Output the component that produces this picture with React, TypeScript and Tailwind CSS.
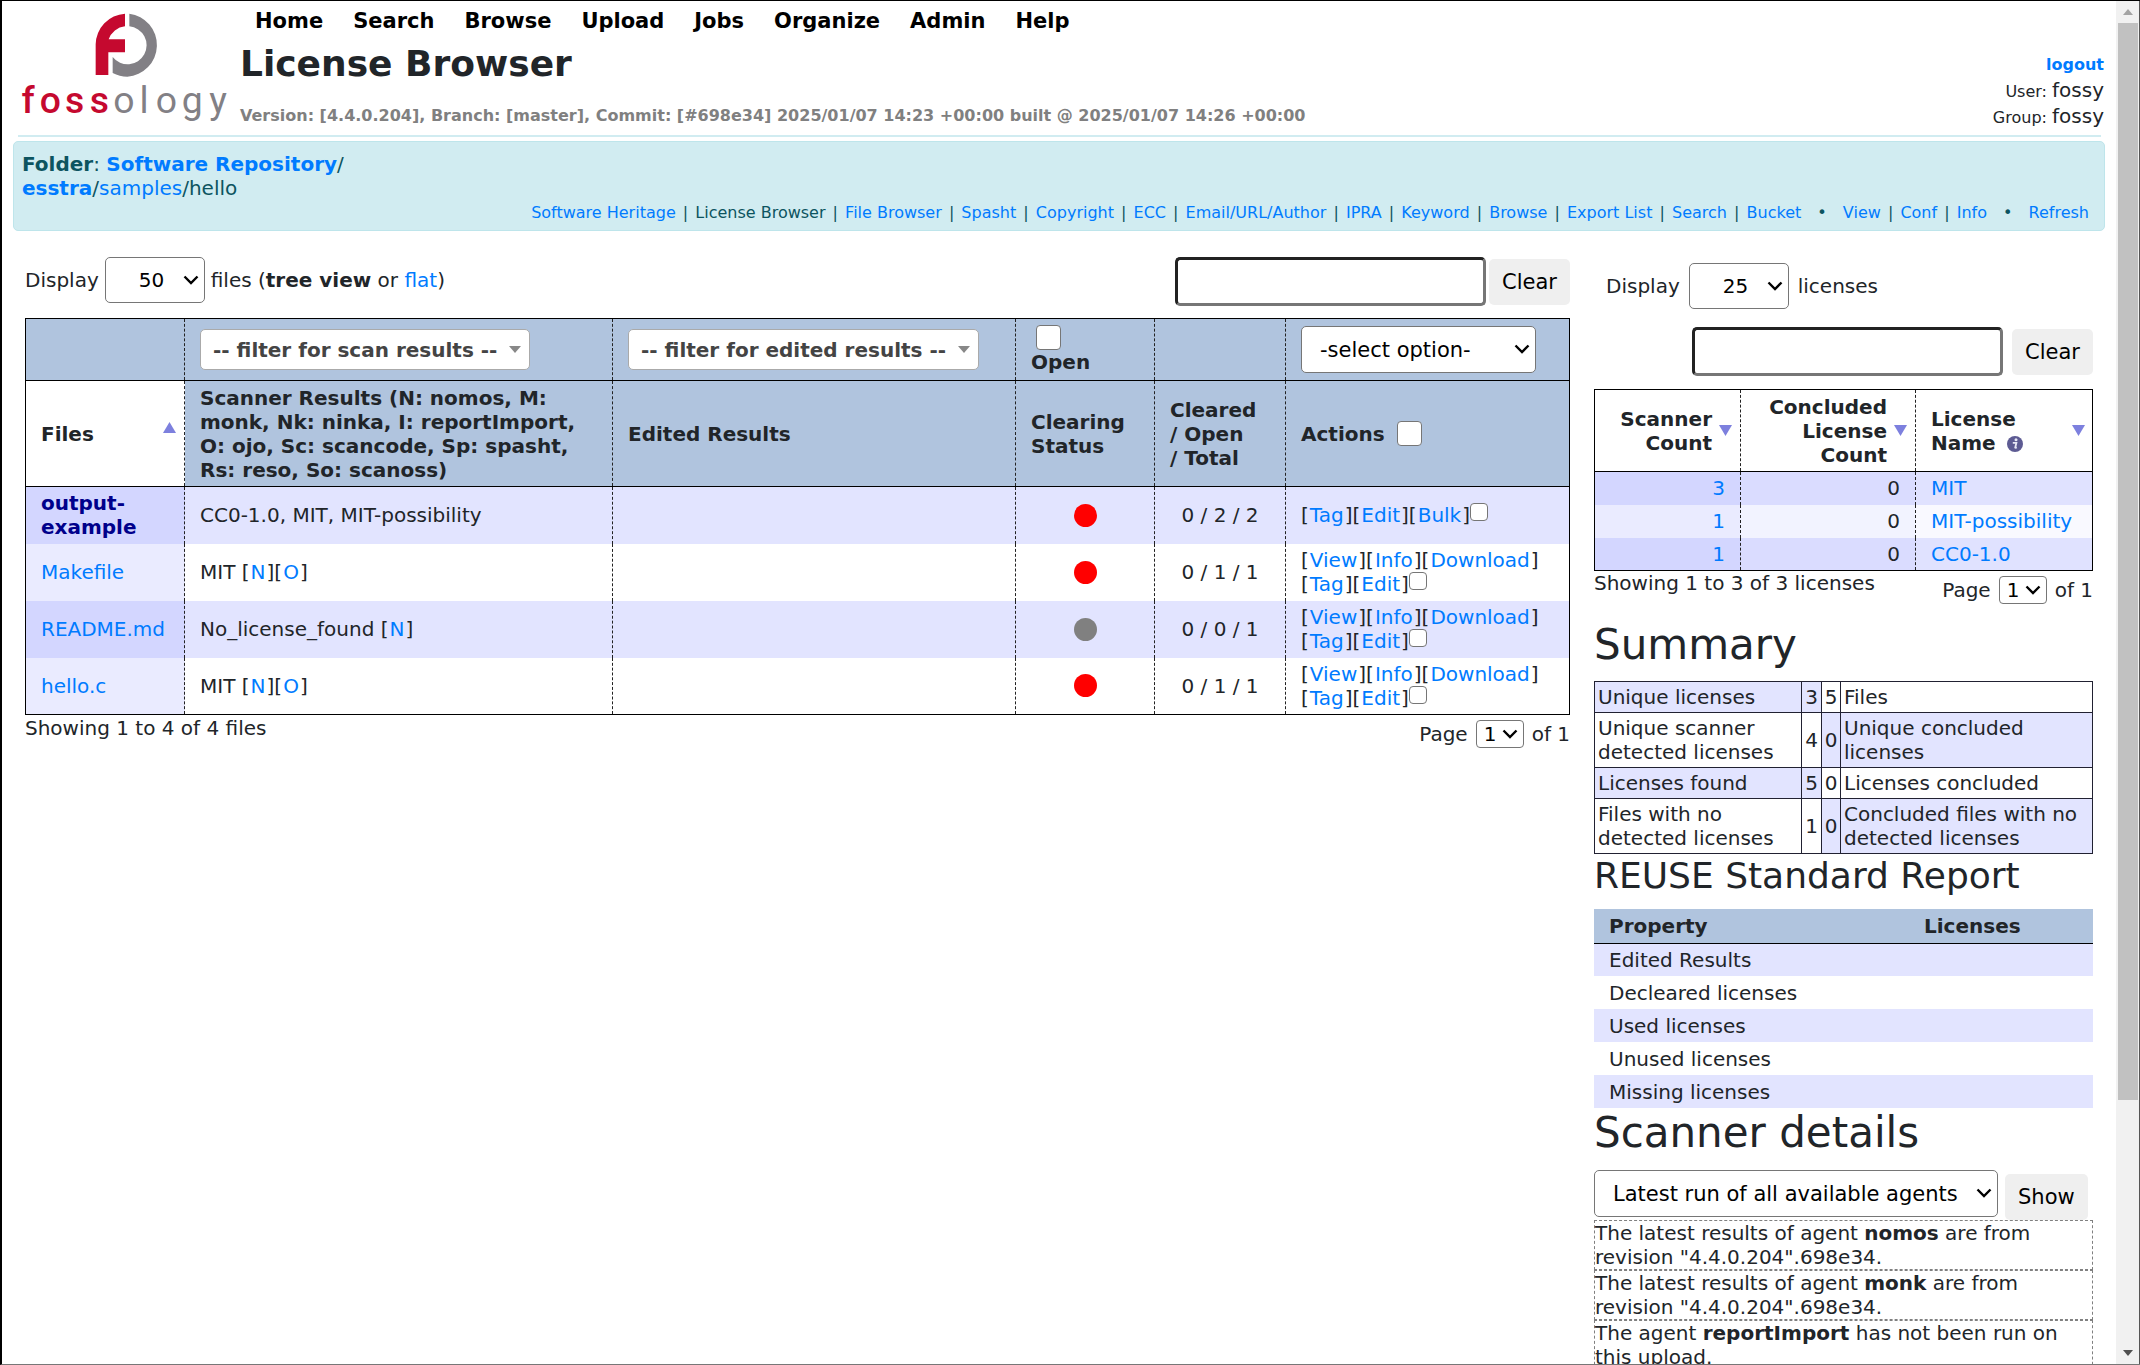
import React from "react";

const link = "text-[#007bff] hover:underline";

function Logo() {
  return (
    <svg viewBox="0 0 660 360" className="h-[120px] w-[220px] shrink-0" role="img" aria-label="fossology">
      <path
        d="M345 26 A94 94 0 0 0 257 118 V210 H295 V142 H345 V103 H296 A57 57 0 0 1 345 64 Z"
        fill="#c5092f"
      />
      <path
        d="M358 26 A95 95 0 0 1 352 215 A95 95 0 0 1 308 204 V156 A57 57 0 1 0 358 64 Z"
        fill="#828085"
      />
      <g fontFamily="Roboto, sans-serif" fontSize="112" textAnchor="middle">
        <text y="323" x="54 121 194 268" fontWeight="500" fill="#c5092f">
          foss
        </text>
        <text y="323" x="342 402 469 547 624" fill="#828085">
          ology
        </text>
      </g>
    </svg>
  );
}

function Chevron({ className }: { className: string }) {
  return (
    <svg viewBox="0 0 16 10" className={"pointer-events-none absolute h-[10px] w-4 " + className} aria-hidden="true">
      <path d="M1.5 1.5 L8 8 L14.5 1.5" fill="none" stroke="#000" strokeWidth="2.4" />
    </svg>
  );
}

function Triangle({ up = false }: { up?: boolean }) {
  return (
    <svg viewBox="0 0 13 11" className="h-[11px] w-[13px] shrink-0" aria-hidden="true">
      <path d={up ? "M6.5 0 L13 11 H0 Z" : "M0 0 H13 L6.5 11 Z"} fill="#7d80de" />
    </svg>
  );
}

function SizeSelect({ value, label }: { value: string; label: string }) {
  return (
    <span className="relative inline-flex">
      <select
        aria-label={label}
        className="h-[46px] w-[100px] appearance-none rounded-[5px] border border-[#767676] bg-white pl-[33px] text-xl text-black"
      >
        <option>{value}</option>
      </select>
      <Chevron className="right-1.5 top-[18px]" />
    </span>
  );
}

function Pager() {
  return (
    <div className="flex items-center gap-2 pt-[5px]">
      <label className="flex items-center gap-2">
        Page
        <span className="relative inline-flex">
          <select className="h-7 w-12 appearance-none rounded-[4px] border border-[#767676] bg-white pl-[7px] text-xl leading-6 text-black">
            <option>1</option>
          </select>
          <Chevron className="right-1.5 top-[9px]" />
        </span>
      </label>
      of 1
    </div>
  );
}

function SearchBox({ label }: { label: string }) {
  return (
    <input
      type="text"
      aria-label={label}
      className="h-[49px] w-[311px] rounded-[5px] border-[3px] border-t-[#222] border-r-[#767676] border-b-[#767676] border-l-[#222] bg-white px-4 text-xl"
    />
  );
}

function GreyButton({ children }: { children: React.ReactNode }) {
  return <button className="h-[46px] rounded-[5px] bg-[#efefef] px-[13px] text-[21px] text-black">{children}</button>;
}

function Check({ label, big = false }: { label: string; big?: boolean }) {
  return (
    <input
      type="checkbox"
      aria-label={label}
      className={
        (big ? "size-[25px] rounded-[4px] " : "size-[18px] rounded-[4px] ") +
        "shrink-0 appearance-none border border-[#767676] bg-white"
      }
    />
  );
}

function FilterSelect({ text, width }: { text: string; width: string }) {
  return (
    <span className={"relative inline-flex " + width}>
      <select
        aria-label={text}
        className="h-[41px] w-full appearance-none rounded-[5px] border border-[#aaa] bg-white pl-3 text-xl font-bold text-[#444]"
      >
        <option>{text}</option>
      </select>
      <svg viewBox="0 0 12 7" className="pointer-events-none absolute right-[9px] top-[17px] h-[7px] w-3" aria-hidden="true">
        <path d="M0 0 H12 L6 7 Z" fill="#888" />
      </svg>
    </span>
  );
}

function Bracketed({ items }: { items: string[] }) {
  return (
    <>
      {items.map((t) => (
        <span key={t}>
          [
          <a href="#" className={"px-px " + link}>
            {t}
          </a>
          ]
        </span>
      ))}
    </>
  );
}

const menu = ["Home", "Search", "Browse", "Upload", "Jobs", "Organize", "Admin", "Help"];

const subMenu = [
  ["Software Heritage", "License Browser", "File Browser", "Spasht", "Copyright", "ECC", "Email/URL/Author", "IPRA", "Keyword", "Browse", "Export List", "Search", "Bucket"],
  ["View", "Conf", "Info"],
  ["Refresh"],
];

const files = [
  { name: "output-example", dir: true, result: "CC0-1.0, MIT, MIT-possibility", scans: [], color: "bg-[red]", count: "0 / 2 / 2", actions: [["Tag", "Edit", "Bulk"]] },
  { name: "Makefile", dir: false, result: "MIT ", scans: ["N", "O"], color: "bg-[red]", count: "0 / 1 / 1", actions: [["View", "Info", "Download"], ["Tag", "Edit"]] },
  { name: "README.md", dir: false, result: "No_license_found ", scans: ["N"], color: "bg-[gray]", count: "0 / 0 / 1", actions: [["View", "Info", "Download"], ["Tag", "Edit"]] },
  { name: "hello.c", dir: false, result: "MIT ", scans: ["N", "O"], color: "bg-[red]", count: "0 / 1 / 1", actions: [["View", "Info", "Download"], ["Tag", "Edit"]] },
];

const licenses = [
  { scanner: 3, concluded: 0, name: "MIT" },
  { scanner: 1, concluded: 0, name: "MIT-possibility" },
  { scanner: 1, concluded: 0, name: "CC0-1.0" },
];

const summary = [
  ["Unique licenses", "3", "5", "Files"],
  ["Unique scanner detected licenses", "4", "0", "Unique concluded licenses"],
  ["Licenses found", "5", "0", "Licenses concluded"],
  ["Files with no detected licenses", "1", "0", "Concluded files with no detected licenses"],
];

const reuse = ["Edited Results", "Decleared licenses", "Used licenses", "Unused licenses", "Missing licenses"];

const dash = "border-r border-dashed border-r-[#222]";

function Header() {
  return (
    <header className="flex min-h-[134px] pr-3 pl-2">
      <div className="pt-1">
        <Logo />
      </div>
      <div className="flex-1 pt-2 pl-2.5">
        <nav className="flex gap-[30px] pl-[15px] text-[21px] leading-6 font-bold text-black">
          {menu.map((m) => (
            <a key={m} href="#">
              {m}
            </a>
          ))}
        </nav>
        <h1 className="mt-[9px] text-[36px] leading-[44px] font-bold">License Browser</h1>
        <p className="mt-[18px] text-base leading-6 font-bold text-[gray]">
          Version: [4.4.0.204], Branch: [master], Commit: [#698e34] 2025/01/07 14:23 +00:00 built @ 2025/01/07 14:26 +00:00
        </p>
      </div>
      <div className="flex flex-col items-end pt-[50px]">
        <a href="#" className="text-base leading-[27px] font-bold text-[#007bff]">
          logout
        </a>
        <div className="text-base leading-[25px]">
          User: <span className="text-xl leading-[25px]">fossy</span>
        </div>
        <div className="text-base leading-[25px]">
          Group: <span className="text-xl leading-[25px]">fossy</span>
        </div>
      </div>
    </header>
  );
}

function FolderBar() {
  return (
    <section className="mx-[11px] mt-1 h-[90px] rounded-[5px] border border-[#bee5eb] bg-[#d1ecf1] px-2 pt-2.5 text-[#0c5460]">
      <div>
        <b>Folder</b>:{" "}
        <a href="#" className="font-bold text-[#007bff]">
          Software Repository
        </a>
        /
        <br />
        <a href="#" className="font-bold text-[#007bff]">
          esstra
        </a>
        /
        <a href="#" className={link}>
          samples
        </a>
        /hello
      </div>
      <div className="pt-px pr-[7px] text-right text-base leading-6">
        {subMenu.map((group, g) => (
          <React.Fragment key={g}>
            {g > 0 && <span className="px-[11px]">&nbsp;•&nbsp;</span>}
            {group.map((m, i) => (
              <React.Fragment key={m}>
                {i > 0 && <span className="px-0.5"> | </span>}
                {m === "License Browser" ? (
                  m
                ) : (
                  <a href="#" className={link}>
                    {m}
                  </a>
                )}
              </React.Fragment>
            ))}
          </React.Fragment>
        ))}
      </div>
    </section>
  );
}

function FilesPanel() {
  return (
    <section className="min-w-0 flex-1">
      <div className="flex items-start justify-between">
        <div className="flex items-center gap-1.5">
          <span>Display</span>
          <SizeSelect value="50" label="Files per page" />
          <span>
            files (<b>tree view</b> or{" "}
            <a href="#" className={link}>
              flat
            </a>
            )
          </span>
        </div>
        <div className="flex items-center gap-[3px]">
          <SearchBox label="Search files" />
          <GreyButton>Clear</GreyButton>
        </div>
      </div>
      <table className="mt-3 w-full table-fixed border-collapse border border-black text-left">
        <colgroup>
          <col className="w-[159px]" />
          <col className="w-[428px]" />
          <col />
          <col className="w-[139px]" />
          <col className="w-[131px]" />
          <col className="w-[284px]" />
        </colgroup>
        <thead className="bg-[#b0c4de]">
          <tr className="h-[62px] border-b border-black">
            <td className={dash} />
            <td className={"px-[15px] " + dash}>
              <FilterSelect text="-- filter for scan results --" width="w-[330px]" />
            </td>
            <td className={"px-[15px] " + dash}>
              <FilterSelect text="-- filter for edited results --" width="w-[351px]" />
            </td>
            <td className={"px-[15px] " + dash}>
              <label className="flex flex-col font-bold">
                <span className="flex pl-[5px]">
                  <Check label="Open" big />
                </span>
                Open
              </label>
            </td>
            <td className={dash} />
            <td className="px-[15px]">
              <span className="relative inline-flex">
                <select
                  aria-label="Action"
                  className="h-[47px] w-[235px] appearance-none rounded-[5px] border border-[#767676] bg-white pl-[18px] text-[21px] text-black"
                >
                  <option>-select option-</option>
                </select>
                <Chevron className="right-1.5 top-[18px]" />
              </span>
            </td>
          </tr>
          <tr className="h-[106px] border-b border-black">
            <th className={"bg-white pr-2 pl-[15px] " + dash}>
              <div className="flex items-center justify-between">
                Files
                <span className="pb-3">
                  <Triangle up />
                </span>
              </div>
            </th>
            <th className={"px-[15px] " + dash}>
              Scanner Results (N: nomos, M: monk, Nk: ninka, I: reportImport, O: ojo, Sc: scancode, Sp: spasht, Rs: reso, So: scanoss)
            </th>
            <th className={"px-[15px] " + dash}>Edited Results</th>
            <th className={"px-[15px] " + dash}>Clearing Status</th>
            <th className={"px-[15px] " + dash}>
              Cleared
              <br />/ Open
              <br />/ Total
            </th>
            <th className="px-[15px]">
              <div className="flex items-center gap-3">
                Actions
                <Check label="Select all files" big />
              </div>
            </th>
          </tr>
        </thead>
        <tbody>
          {files.map((f) => (
            <tr key={f.name} className="group h-[57px] odd:bg-[#e2e4ff]">
              <td className={"bg-[#eaebff] pl-[15px] group-odd:bg-[#d3d6ff] " + dash}>
                <a href="#" className={f.dir ? "font-bold text-[#00008b]" : link}>
                  {f.name}
                </a>
              </td>
              <td className={"px-[15px] " + dash}>
                {f.result}
                <Bracketed items={f.scans} />
              </td>
              <td className={dash} />
              <td className={dash}>
                <div className={"mx-auto size-[23px] rounded-full " + f.color} />
              </td>
              <td className={"text-center " + dash}>{f.count}</td>
              <td className="pl-[15px] whitespace-nowrap">
                {f.actions.map((line, i) => (
                  <div key={i} className="flex h-6">
                    <span>
                      <Bracketed items={line} />
                    </span>
                    {i === f.actions.length - 1 && <Check label={"Select " + f.name} />}
                  </div>
                ))}
              </td>
            </tr>
          ))}
        </tbody>
      </table>
      <div className="flex items-start justify-between">
        <span className="pt-px">Showing 1 to 4 of 4 files</span>
        <Pager />
      </div>
    </section>
  );
}

function LicensesPanel() {
  return (
    <aside className="w-[499px] shrink-0 pt-1.5">
      <div className="flex items-center gap-[9px] pl-3">
        <span>Display</span>
        <SizeSelect value="25" label="Licenses per page" />
        <span>licenses</span>
      </div>
      <div className="mt-[18px] flex items-center justify-end gap-[9px]">
        <SearchBox label="Search licenses" />
        <GreyButton>Clear</GreyButton>
      </div>
      <table className="mt-[13px] w-full table-fixed border-collapse border border-black">
        <colgroup>
          <col className="w-[146px]" />
          <col className="w-[175px]" />
          <col />
        </colgroup>
        <thead>
          <tr className="h-[82px] border-b border-black">
            <th className={"pr-2 pl-4 text-right " + dash}>
              <div className="flex items-center justify-end gap-[7px]">
                Scanner Count
                <Triangle />
              </div>
            </th>
            <th className={"pr-2 pl-4 text-right " + dash}>
              <div className="flex items-center justify-end gap-[7px]">
                Concluded License Count
                <Triangle />
              </div>
            </th>
            <th className="pr-[7px] pl-[15px] text-left">
              <div className="flex items-center justify-between">
                <span>
                  License
                  <br />
                  Name{" "}
                  <svg viewBox="0 0 16 16" className="ml-1 inline size-4" role="img" aria-label="Info">
                    <circle cx="8" cy="8" r="8" fill="#5d5b93" />
                    <circle cx="9" cy="3.8" r="1.5" fill="#e8e8f6" />
                    <path d="M5.8 6.8 H9.4 L8.2 11.6 Q8.6 12 9.8 11.4" fill="none" stroke="#e8e8f6" strokeWidth="1.8" />
                  </svg>
                </span>
                <Triangle />
              </div>
            </th>
          </tr>
        </thead>
        <tbody>
          {licenses.map((l) => (
            <tr key={l.name} className="group h-[33px]">
              <td className={"bg-[#eaebff] pr-[15px] text-right group-odd:bg-[#d3d6ff] " + dash}>
                <a href="#" className={link}>
                  {l.scanner}
                </a>
              </td>
              <td className={"bg-[#f2f3ff] pr-[15px] text-right group-odd:bg-[#dadcff] " + dash}>{l.concluded}</td>
              <td className="bg-[#f9f9ff] pl-[15px] group-odd:bg-[#e0e2ff]">
                <a href="#" className={link}>
                  {l.name}
                </a>
              </td>
            </tr>
          ))}
        </tbody>
      </table>
      <div className="flex items-start justify-between">
        <span>Showing 1 to 3 of 3 licenses</span>
        <Pager />
      </div>

      <h2 className="mt-4 text-[42px] leading-[50px]">Summary</h2>
      <table className="mt-[11px] w-full table-fixed border-collapse">
        <colgroup>
          <col className="w-[207px]" />
          <col className="w-5" />
          <col className="w-[19px]" />
          <col />
        </colgroup>
        <tbody>
          {summary.map((r) => (
            <tr key={r[0]} className="group">
              <td className="border border-[#212132] p-[3px] group-odd:bg-[#e2e4ff]">{r[0]}</td>
              <td className="border border-[#212132] py-[3px] text-center group-odd:bg-[#e2e4ff]">{r[1]}</td>
              <td className="border border-[#212132] py-[3px] text-center group-even:bg-[#e2e4ff]">{r[2]}</td>
              <td className="border border-[#212132] p-[3px] group-even:bg-[#e2e4ff]">{r[3]}</td>
            </tr>
          ))}
        </tbody>
      </table>

      <h2 className="text-[36px] leading-[44px]">REUSE Standard Report</h2>
      <table className="mt-[11px] w-full table-fixed border-collapse text-left">
        <colgroup>
          <col className="w-[315px]" />
          <col />
        </colgroup>
        <thead className="bg-[#b0c4de]">
          <tr className="h-[34px] border-b border-black">
            <th className="pl-[15px]">Property</th>
            <th className="pl-[15px]">Licenses</th>
          </tr>
        </thead>
        <tbody>
          {reuse.map((r) => (
            <tr key={r} className="h-[33px] odd:bg-[#e2e4ff]">
              <td className="pl-[15px]">{r}</td>
              <td />
            </tr>
          ))}
        </tbody>
      </table>

      <h2 className="text-[42px] leading-[50px]">Scanner details</h2>
      <div className="mt-3 flex items-start gap-[7px]">
        <span className="relative inline-flex">
          <select
            aria-label="Agent run"
            className="h-[47px] w-[404px] appearance-none rounded-[5px] border border-[#767676] bg-white pl-[18px] text-[21px] text-black"
          >
            <option>Latest run of all available agents</option>
          </select>
          <Chevron className="right-1.5 top-[18px]" />
        </span>
        <span className="pt-1">
          <GreyButton>Show</GreyButton>
        </span>
      </div>
      <div>
        <p className="border border-dashed border-[gray]">
          The latest results of agent <b>nomos</b> are from revision "4.4.0.204".698e34.
        </p>
        <p className="border border-dashed border-[gray]">
          The latest results of agent <b>monk</b> are from revision "4.4.0.204".698e34.
        </p>
        <p className="border border-dashed border-[gray]">
          The agent <b>reportImport</b> has not been run on this upload.
        </p>
      </div>
    </aside>
  );
}

function Scrollbar() {
  return (
    <div className="flex w-6 shrink-0 flex-col items-center border-r border-[#555] bg-[#f1f1f1]" aria-hidden="true">
      <svg viewBox="0 0 10 6" className="my-2 h-1.5 w-2.5 shrink-0">
        <path d="M5 0 L10 6 H0 Z" fill="#a3a3a3" />
      </svg>
      <div className="w-5 shrink-0 basis-[79%] bg-[#c1c1c1]" />
      <div className="flex-1" />
      <svg viewBox="0 0 10 6" className="my-2 h-1.5 w-2.5 shrink-0">
        <path d="M0 0 H10 L5 6 Z" fill="#505050" />
      </svg>
    </div>
  );
}

export default function App() {
  return (
    <div className="flex h-screen overflow-hidden border-t border-b border-l-2 border-t-black border-b-[#777] border-l-black bg-white font-['DejaVu_Sans',Verdana,sans-serif] text-xl leading-6 text-[#212529]">
      <div className="min-w-0 flex-1 overflow-hidden">
        <Header />
        <hr className="mr-[15px] ml-4 border-t-2 border-[#d1ecf1]" />
        <FolderBar />
        <main className="flex items-start gap-6 pt-[26px] pr-[23px] pl-[23px]">
          <FilesPanel />
          <LicensesPanel />
        </main>
      </div>
      <Scrollbar />
    </div>
  );
}
